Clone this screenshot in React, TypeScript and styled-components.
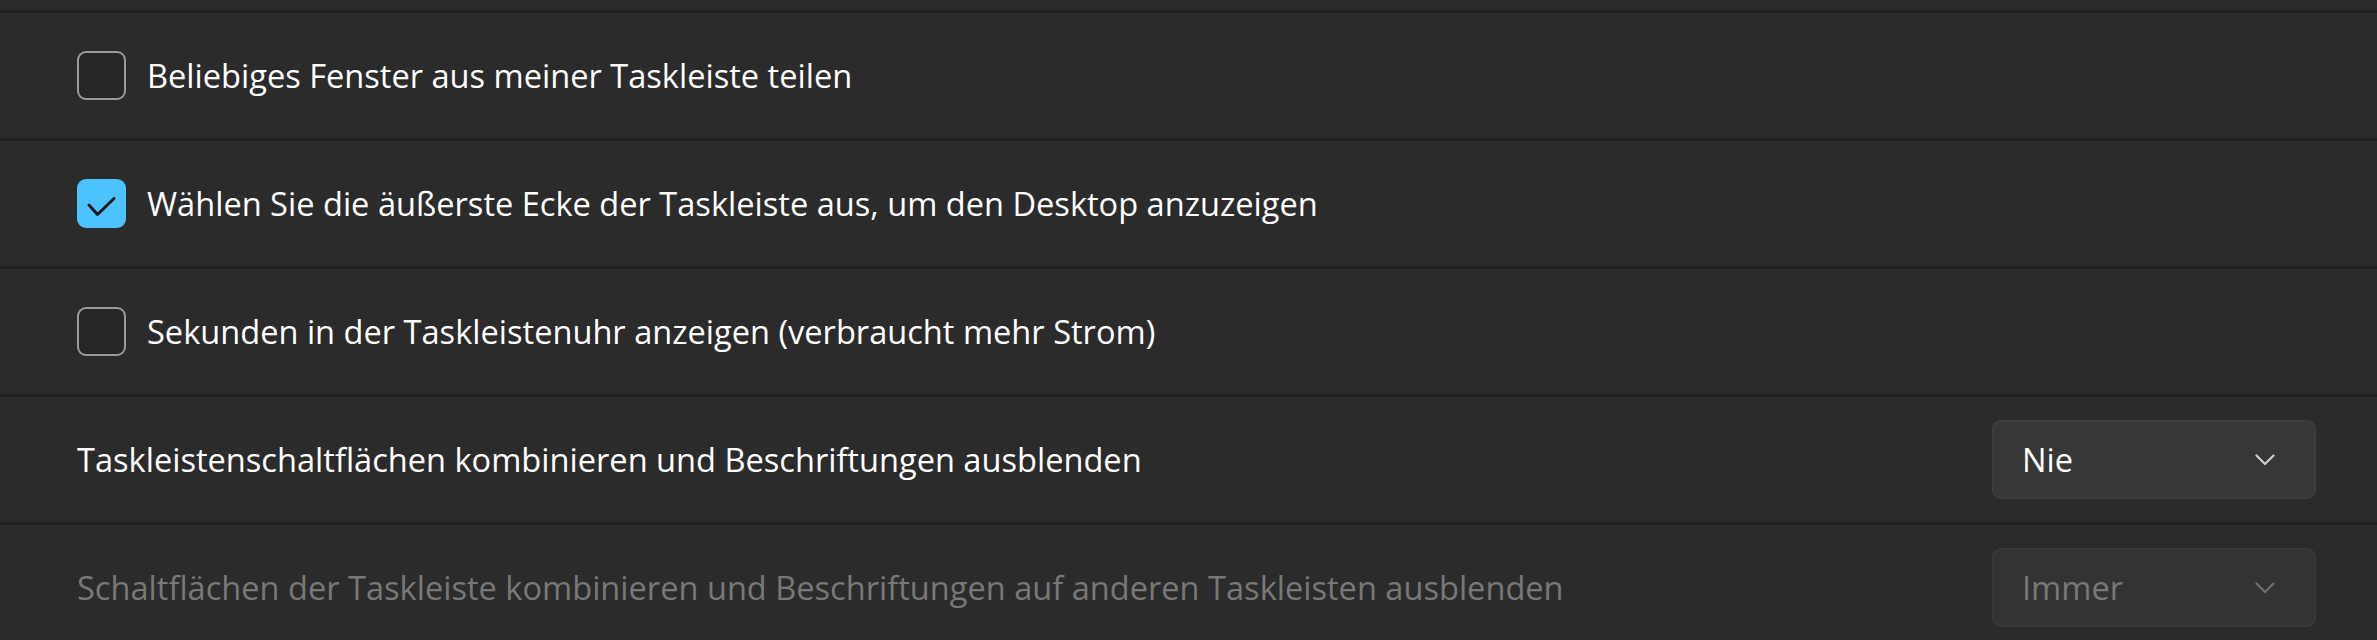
import { FunctionComponent } from "react";
import styled, { createGlobalStyle } from "styled-components";

const GlobalStyle = createGlobalStyle`
  html, body {
    margin: 0;
    padding: 0;
    background: #202020;
    overflow: hidden;
  }
  body {
    font-family: "Open Sans", "Noto Sans", sans-serif;
    -webkit-font-smoothing: antialiased;
  }
`;

interface CheckRowProps {
  label: string;
  checked?: boolean;
}

const CheckRow: FunctionComponent<CheckRowProps> = ({ label, checked }) => (
  <Row>
    <Box $checked={checked}>
      {checked && (
        <svg width="49" height="49" viewBox="0 0 49 49">
          <path
            d="M12 26 L20.5 35.5 L37 19.5"
            fill="none"
            stroke="#1a1a1a"
            strokeWidth="3"
            strokeLinecap="round"
            strokeLinejoin="round"
          />
        </svg>
      )}
    </Box>
    <Label>{label}</Label>
  </Row>
);

interface SelectRowProps {
  label: string;
  value: string;
  disabled?: boolean;
}

const SelectRow: FunctionComponent<SelectRowProps> = ({ label, value, disabled }) => (
  <Row $spread>
    <Label $disabled={disabled}>{label}</Label>
    <Select $disabled={disabled}>
      <span>{value}</span>
      <svg width="20" height="12" viewBox="0 0 20 12">
        <path
          d="M1.5 1.5 L10 10 L18.5 1.5"
          fill="none"
          stroke={disabled ? "#6f6f6f" : "#d0d0d0"}
          strokeWidth="2.2"
          strokeLinecap="round"
          strokeLinejoin="round"
        />
      </svg>
    </Select>
  </Row>
);

export default function App() {
  return (
    <>
      <GlobalStyle />
      <Page>
        <Stub />
        <CheckRow label="Beliebiges Fenster aus meiner Taskleiste teilen" />
        <CheckRow
          checked
          label="Wählen Sie die äußerste Ecke der Taskleiste aus, um den Desktop anzuzeigen"
        />
        <CheckRow label="Sekunden in der Taskleistenuhr anzeigen (verbraucht mehr Strom)" />
        <SelectRow
          label="Taskleistenschaltflächen kombinieren und Beschriftungen ausblenden"
          value="Nie"
        />
        <SelectRow
          disabled
          label="Schaltflächen der Taskleiste kombinieren und Beschriftungen auf anderen Taskleisten ausblenden"
          value="Immer"
        />
      </Page>
    </>
  );
}

const Page = styled.div`
  display: flex;
  flex-direction: column;
  gap: 3px;
  height: 640px;
`;

const Stub = styled.div`
  height: 10px;
  flex-shrink: 0;
  background: #2b2b2b;
`;

const Row = styled.div<{ $spread?: boolean }>`
  flex-shrink: 0;
  height: 125px;
  box-sizing: border-box;
  background: #2b2b2b;
  display: flex;
  align-items: center;
  justify-content: ${p => (p.$spread ? "space-between" : "flex-start")};
  gap: 21px;
  padding: 0 61px 0 77px;
`;

const Box = styled.div<{ $checked?: boolean }>`
  width: 49px;
  height: 49px;
  box-sizing: border-box;
  border-radius: 9px;
  flex-shrink: 0;
  display: flex;
  background: ${p => (p.$checked ? "#4cc2ff" : "#262626")};
  border: ${p => (p.$checked ? "none" : "2px solid #9a9a9a")};
`;

const Label = styled.div<{ $disabled?: boolean }>`
  font-size: 32.6px;
  color: ${p => (p.$disabled ? "#787878" : "#ffffff")};
  white-space: nowrap;
`;

const Select = styled.div<{ $disabled?: boolean }>`
  width: 324px;
  height: 79px;
  box-sizing: border-box;
  border-radius: 9px;
  display: flex;
  align-items: center;
  justify-content: space-between;
  padding: 0 39px 0 28px;
  font-size: 32.6px;
  background: ${p => (p.$disabled ? "#333333" : "#373737")};
  border: 2px solid ${p => (p.$disabled ? "#383838" : "#3d3d3d")};
  color: ${p => (p.$disabled ? "#787878" : "#ffffff")};
`;
